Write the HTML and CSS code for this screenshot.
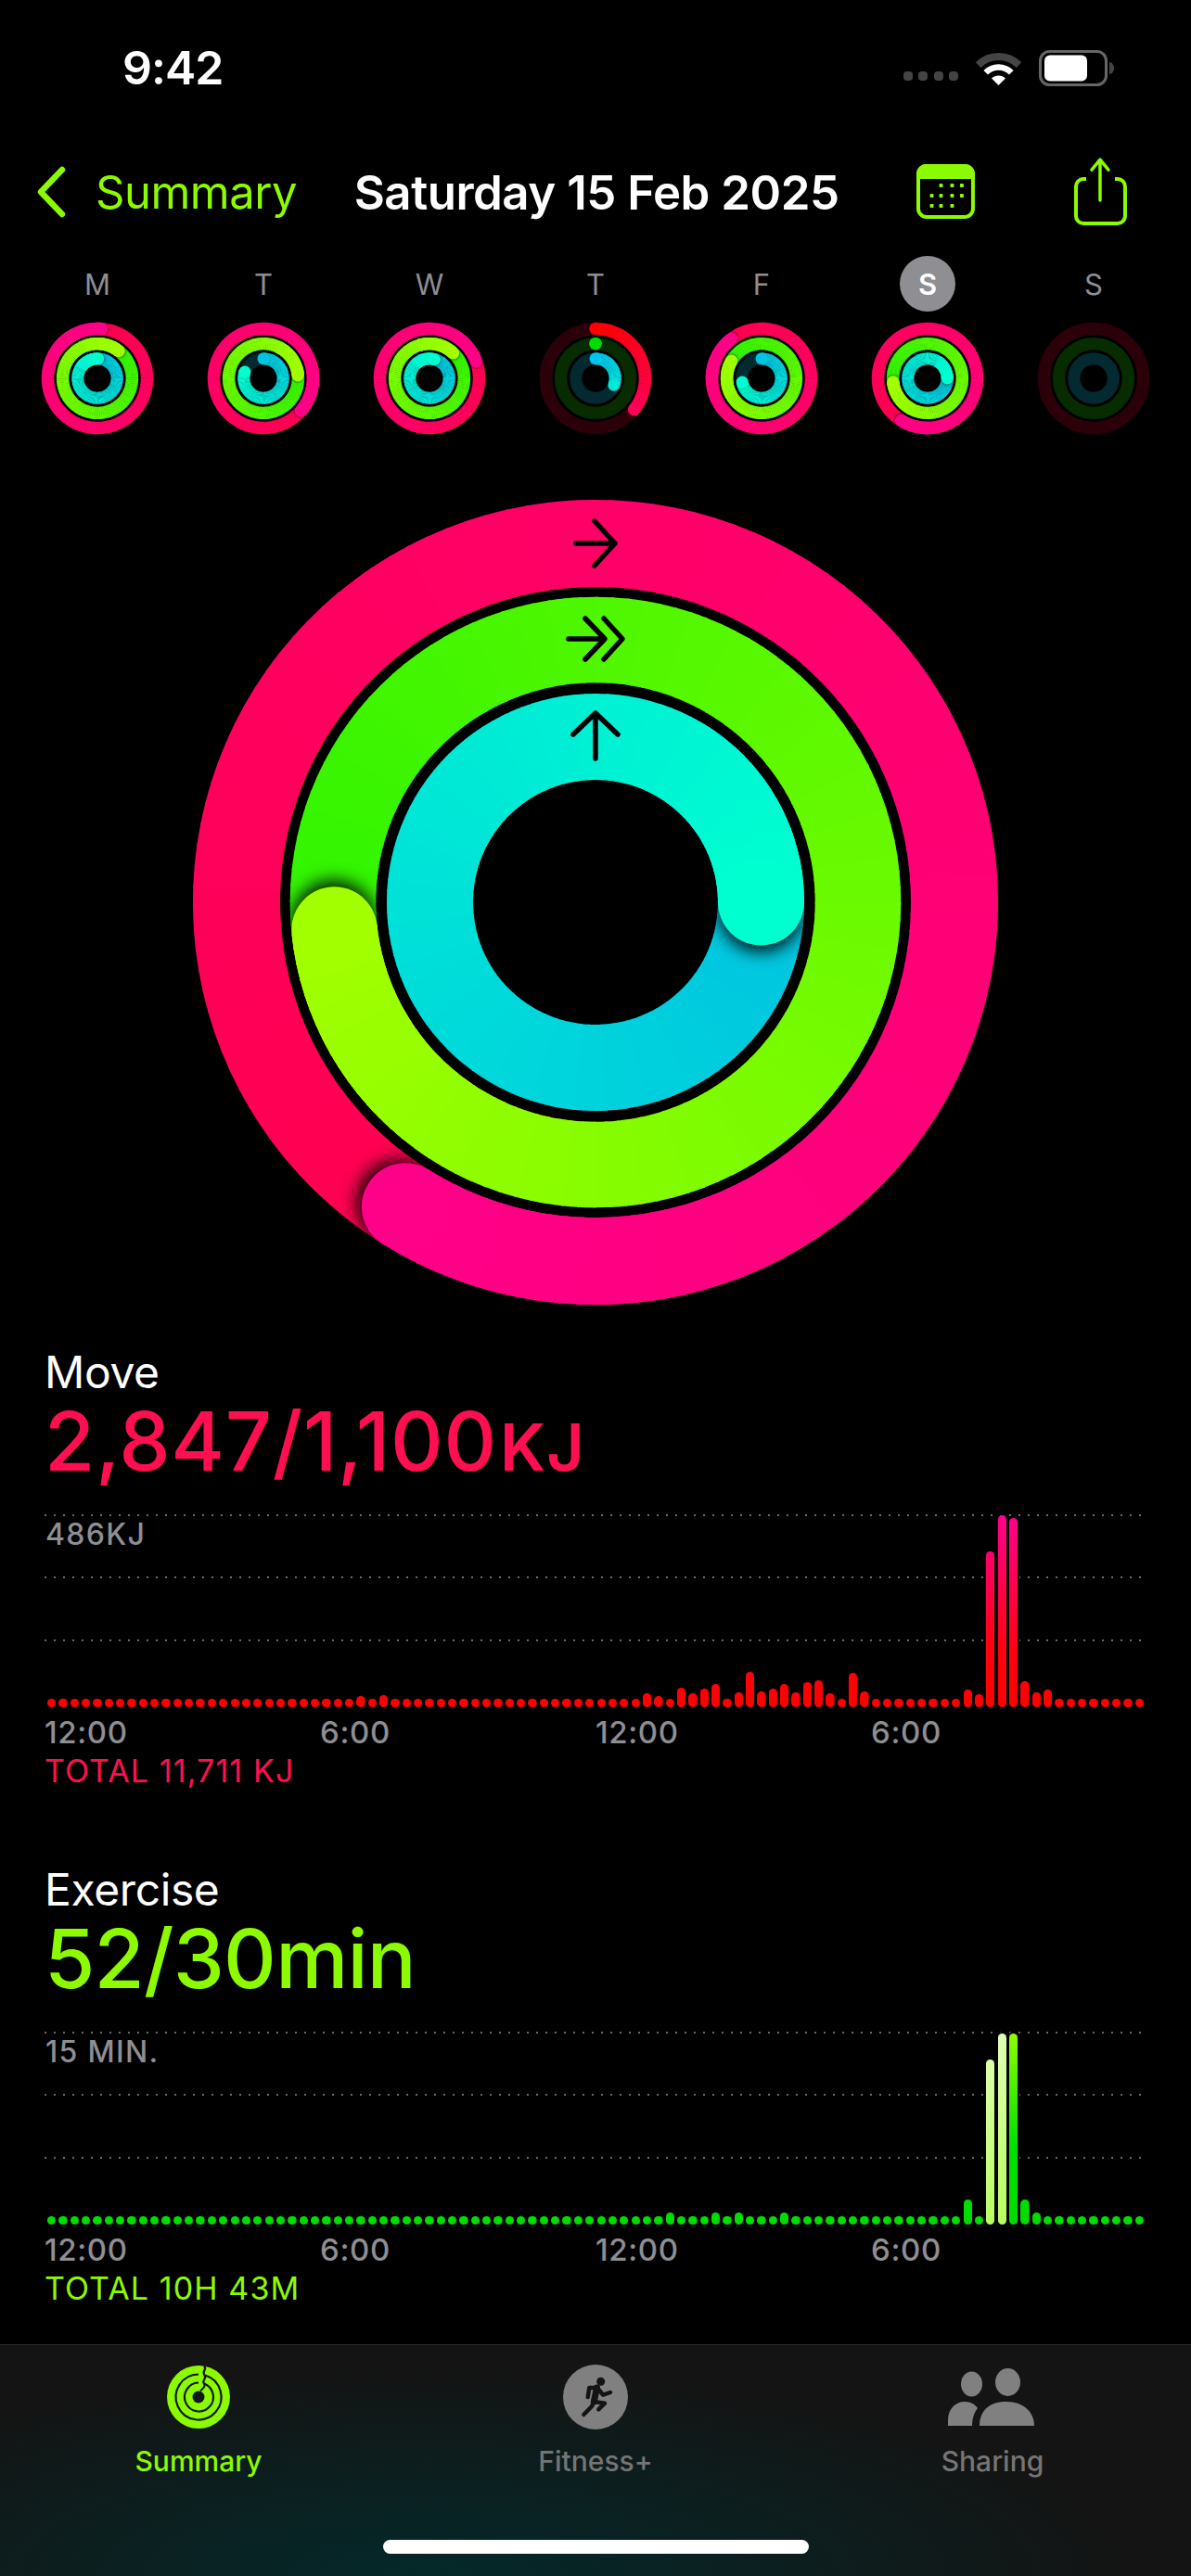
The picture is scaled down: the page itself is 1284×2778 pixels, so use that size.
FILE: index.html
```html
<!DOCTYPE html>
<html lang="en">
<head>
    <meta charset="UTF-8">
    <meta name="viewport" content="width=device-width, initial-scale=1.0">
    <title>Summary</title>
    <link rel="stylesheet" href="styles.css">
</head>
<body>
    <div class="phone">
        <div class="status">
            <span class="status-time">9:42</span>
            <div class="status-icons">
                <div class="signal"><i></i><i></i><i></i><i></i></div>
                <svg class="wifi" width="51" height="37" viewBox="0 0 51 37">
                    <path d="M3.6 15.1A31 31 0 0 1 47.4 15.1" fill="none" stroke="#444" stroke-width="8"/>
                    <path d="M11.7 23.2A19.5 19.5 0 0 1 39.3 23.2" fill="none" stroke="#fff" stroke-width="6.5"/>
                    <path d="M25.5 37L18 29.5A10.6 10.6 0 0 1 33 29.5Z" fill="#fff"/>
                </svg>
                <svg class="battery" width="82" height="39" viewBox="0 0 82 39">
                    <rect x="1.5" y="1.5" width="71" height="36" rx="10" fill="none" stroke="#666" stroke-width="3"/>
                    <rect x="6" y="5.5" width="46" height="28" rx="6" fill="#fff"/>
                    <path d="M76 13c3 .5 5 3 5 6.500s-2 6-5 6.500z" fill="#444"/>
                </svg>
            </div>
        </div>

        <header class="nav">
            <svg class="nav-back" width="33" height="56" viewBox="0 0 33 56">
                <path d="M28 4L5 28L28 52" fill="none" stroke="#8cfa00" stroke-width="6.500" stroke-linecap="round" stroke-linejoin="round"/>
            </svg>
            <span class="nav-label">Summary</span>
            <h1 class="nav-title">Saturday 15 Feb 2025</h1>
            <svg class="nav-calendar" width="63" height="59" viewBox="0 0 63 59">
                <path d="M10 0H53A10 10 0 0 1 63 10V16H0V10A10 10 0 0 1 10 0Z" fill="#8cfa00"/>
                <rect x="2" y="2" width="59" height="55" rx="9" fill="none" stroke="#8cfa00" stroke-width="4"/>
                <g fill="#8cfa00">
                    <rect x="24.500" y="21" width="4" height="4" rx="1"/>
                    <rect x="36.500" y="21" width="4" height="4" rx="1"/>
                    <rect x="47" y="21" width="4" height="4" rx="1"/>
                    <rect x="14.500" y="32" width="4" height="4" rx="1"/>
                    <rect x="24.500" y="32" width="4" height="4" rx="1"/>
                    <rect x="36.500" y="32" width="4" height="4" rx="1"/>
                    <rect x="47" y="32" width="4" height="4" rx="1"/>
                    <rect x="14.500" y="43" width="4" height="4" rx="1"/>
                    <rect x="24.500" y="43" width="4" height="4" rx="1"/>
                    <rect x="36.500" y="43" width="4" height="4" rx="1"/>
                </g>
            </svg>
            <svg class="nav-share" width="58" height="75" viewBox="0 0 58 75">
                <path d="M13 24H10A8 8 0 0 0 2 32V64A8 8 0 0 0 10 72H47A8 8 0 0 0 55 64V32A8 8 0 0 0 47 24H44" fill="none" stroke="#8cfa00" stroke-width="4"/>
                <path d="M28 47V4M19 14L28 3L37 14" fill="none" stroke="#8cfa00" stroke-width="3.500" stroke-linecap="round" stroke-linejoin="round"/>
            </svg>
        </header>

        <div class="week">
            <div class="day"><span class="day-name">M</span><svg class="day-ring" width="124" height="124"></svg></div>
            <div class="day"><span class="day-name">T</span><svg class="day-ring" width="124" height="124"></svg></div>
            <div class="day"><span class="day-name">W</span><svg class="day-ring" width="124" height="124"></svg></div>
            <div class="day"><span class="day-name">T</span><svg class="day-ring" width="124" height="124"></svg></div>
            <div class="day"><span class="day-name">F</span><svg class="day-ring" width="124" height="124"></svg></div>
            <div class="day"><span class="day-name day-today">S</span><svg class="day-ring" width="124" height="124"></svg></div>
            <div class="day"><span class="day-name">S</span><svg class="day-ring" width="124" height="124"></svg></div>
        </div>

        <svg class="hero" id="heroRing" width="880" height="880" viewBox="0 0 880 880"></svg>

        <div class="metrics">
            <section class="metric">
                <div class="metric-name">Move</div>
                <div class="metric-value value-move">2,847/1,100<span class="metric-unit">KJ</span></div>
                <div class="chart">
                    <div class="grid-row"><span class="chart-max">486KJ</span></div>
                    <div class="grid-row"></div>
                    <div class="grid-row"></div>
                    <div class="bars bars-move" id="moveBars"></div>
                </div>
                <div class="chart-hours"><span>12:00</span><span>6:00</span><span>12:00</span><span>6:00</span></div>
                <div class="metric-total value-move">TOTAL 11,711 KJ</div>
            </section>

            <section class="metric">
                <div class="metric-name">Exercise</div>
                <div class="metric-value value-exercise">52/30min</div>
                <div class="chart">
                    <div class="grid-row"><span class="chart-max">15 MIN.</span></div>
                    <div class="grid-row"></div>
                    <div class="grid-row"></div>
                    <div class="bars bars-exercise" id="exerciseBars"></div>
                </div>
                <div class="chart-hours"><span>12:00</span><span>6:00</span><span>12:00</span><span>6:00</span></div>
                <div class="metric-total value-exercise">TOTAL 10H 43M</div>
            </section>
        </div>

        <nav class="tabbar">
            <div class="tab tab-active">
                <svg width="70" height="70" viewBox="0 0 70 70">
                    <circle cx="35" cy="35" r="34" fill="#8cfa00"/>
                    <g fill="none" stroke="#10181a" stroke-width="2.200">
                        <path d="M42 11.500A24.500 24.500 0 1 1 35 10.500"/>
                        <path d="M41 20.500A15.500 15.500 0 1 1 35 19.500"/>
                        <path d="M41 1.500C45 5 38 7 41.500 11.500C44.500 15 38 17 41 20.500C43 23 40 26 37 28.500"/>
                    </g>
                    <circle cx="35" cy="35" r="6.500" fill="#10181a"/>
                </svg>
                <span class="tab-label">Summary</span>
            </div>
            <div class="tab">
                <svg width="70" height="70" viewBox="0 0 70 70">
                    <circle cx="35" cy="35" r="35" fill="#808080"/>
                    <circle cx="40.700" cy="18.300" r="4.500" fill="#141414"/>
                    <path d="M36.500 25L33.300 40" fill="none" stroke="#141414" stroke-width="7" stroke-linecap="round"/>
                    <path d="M26.700 35L28.300 25H36.700L43.300 32.700L51 30M33.300 40L31 45L22.300 54M33.300 40L45 41.700L38.300 48.300" fill="none" stroke="#141414" stroke-width="4.500" stroke-linecap="round" stroke-linejoin="round"/>
                </svg>
                <span class="tab-label">Fitness+</span>
            </div>
            <div class="tab">
                <svg width="100" height="70" viewBox="0 0 100 70">
                    <g fill="#808080">
                        <ellipse cx="27.500" cy="21" rx="11.500" ry="13.500"/>
                        <ellipse cx="66.500" cy="19" rx="13.500" ry="15"/>
                        <path d="M2 66V60C2 48 10 40 20 40C27 40 31 43 34 47C30 52 28 59 28 66Z"/>
                        <path d="M36 66C36 50 46 40 65 40C84 40 95 52 95 66Z"/>
                    </g>
                </svg>
                <span class="tab-label">Sharing</span>
            </div>
            <div class="home-indicator"></div>
        </nav>
    </div>
    <script src="app.js"></script>
</body>
</html>
```

FILE: styles.css
```css
* {
    margin: 0;
    padding: 0;
    box-sizing: border-box;
    font-family: 'Inter', 'Liberation Sans', sans-serif;
}

body {
    background-color: #000;
    color: #fff;
}

.phone {
    width: 1284px;
    height: 2778px;
    display: flex;
    flex-direction: column;
    overflow: hidden;
    background-color: #000;
}

.status {
    height: 146px;
    flex: none;
    display: flex;
    align-items: center;
    justify-content: space-between;
    padding: 0 82px 0 132px;
}

.status-time {
    font-size: 50px;
    font-weight: 600;
    letter-spacing: -1px;
}

.status-icons {
    display: flex;
    align-items: center;
    gap: 18px;
}

.signal {
    display: flex;
    gap: 6.500px;
    margin-top: 18px;
}

.signal i {
    display: block;
    width: 10px;
    height: 10px;
    border-radius: 4px;
    background: #444;
}

.nav {
    height: 130px;
    flex: none;
    display: flex;
    align-items: center;
    padding: 0 68px 0 39px;
}

.nav-back {
    margin-top: -8px;
}

.nav-label {
    font-size: 49px;
    color: #8cfa00;
    margin: -7px 0 0 31px;
    width: 279px;
    letter-spacing: -0.5px;
}

.nav-title {
    font-size: 51px;
    font-weight: 600;
    letter-spacing: -0.5px;
    width: 607px;
    margin-top: -7px;
}

.nav-calendar {
    margin-top: -9px;
}

.nav-share {
    margin-left: 107px;
    margin-top: -10px;
}

.week {
    flex: none;
    display: grid;
    grid-template-columns: repeat(7, 179px);
    padding: 0 15.500px;
}

.day {
    display: flex;
    flex-direction: column;
    align-items: center;
    gap: 10px;
}

.day-name {
    width: 60px;
    height: 60px;
    border-radius: 50%;
    display: flex;
    align-items: center;
    justify-content: center;
    font-size: 31px;
    color: #8e8e93;
}

.day-today {
    background: #8e8e93;
    color: #fff;
    font-weight: 600;
}

.hero {
    flex: none;
    display: block;
    margin: 63px 0 0 202px;
}

.metrics {
    flex: 1;
    min-height: 0;
}

.metric {
    height: 558px;
    padding: 39px 54px 0 48px;
}

.metric-name {
    font-size: 48px;
    line-height: 56px;
    letter-spacing: -0.4px;
}

.metric-value {
    font-size: 88px;
    line-height: 88px;
    font-weight: 500;
    margin-top: 2px;
}

.metric-unit {
    font-size: 70px;
    line-height: 0;
    font-weight: 600;
    letter-spacing: 1px;
    margin-left: 3px;
}

.value-move {
    color: #ff0f50;
}

.value-exercise {
    color: #8cfa00;
}

.metric-value.value-move {
    letter-spacing: 0.7px;
}

.metric-value.value-exercise {
    letter-spacing: -0.8px;
}

.chart {
    position: relative;
    height: 208px;
    margin-top: 35px;
}

.grid-row {
    height: 67.300px;
    background-image: linear-gradient(to right, #6a6a6a 2px, transparent 2px);
    background-size: 10px 2px;
    background-repeat: repeat-x;
}

.chart-max {
    display: block;
    padding: 4px 0 0 1px;
    font-size: 32px;
    line-height: 36px;
    font-weight: 500;
    letter-spacing: 1.300px;
    color: #8e8e93;
}

.bars {
    position: absolute;
    left: 3px;
    right: -3px;
    bottom: 0;
    display: flex;
    align-items: flex-end;
    justify-content: space-between;
}

.bar {
    width: 9.300px;
    border-radius: 5px;
    box-shadow: 0 0 0 2px #000;
    background-size: 100% 208px;
    background-position: bottom;
}

.bars-move .bar {
    background-image: linear-gradient(to top, #ff0000, #ff0010 30%, #ff0090);
}

.bars-exercise .bar {
    background-image: linear-gradient(to top, #00dc00, #00e000 40%, #90ff00);
}

.bars-exercise .bar-pale {
    background-image: linear-gradient(to top, #b8ff60, #e0ffb4);
}

.chart-hours {
    display: grid;
    grid-template-columns: repeat(4, 297px);
    margin-top: 9px;
    font-size: 33px;
    line-height: 36px;
    font-weight: 500;
    color: #8e8e93;
    letter-spacing: 0.6px;
}

.metric-total {
    font-size: 34px;
    line-height: 36px;
    margin-top: 6px;
    letter-spacing: 1.100px;
}

.tabbar {
    position: relative;
    flex: none;
    height: 250px;
    display: grid;
    grid-template-columns: repeat(3, 428px);
    border-top: 1px solid #2a2a2a;
    padding-top: 21px;
    background: radial-gradient(ellipse 760px 220px at 36% 100%, #04292a, rgba(4,41,42,0)), #141414;
}

.tab {
    display: flex;
    flex-direction: column;
    align-items: center;
    gap: 16px;
}

.tab-label {
    font-size: 30px;
    line-height: 36px;
    font-weight: 500;
    color: #757575;
}

.tab-active .tab-label {
    color: #8cfa00;
}

.home-indicator {
    position: absolute;
    left: 413px;
    bottom: 24px;
    width: 459px;
    height: 15px;
    border-radius: 8px;
    background: #fff;
}
```

FILE: app.js
```js
const NS = 'http://www.w3.org/2000/svg';
let idCount = 0;

const MOVE = { from: '#ff0050', to: '#ff0088', track: '#2c0008' };
const EXERCISE = { from: '#30f400', to: '#a2ff00', track: '#062c00' };
const STAND = { from: '#00c4e0', to: '#00ffd0', track: '#032a30' };

const el = (parent, name, attrs) => {
    const node = document.createElementNS(NS, name);
    Object.keys(attrs).forEach((k) => node.setAttribute(k, attrs[k]));
    parent.appendChild(node);
    return node;
};

const hex = (c) => [1, 3, 5].map((i) => parseInt(c.substr(i, 2), 16));

const mix = (a, b, t) => {
    const x = hex(a), y = hex(b);
    return 'rgb(' + x.map((v, i) => Math.round(v + (y[i] - v) * t)).join(',') + ')';
};

const point = (c, r, deg) => {
    const rad = deg * Math.PI / 180;
    return [c + r * Math.sin(rad), c - r * Math.cos(rad)];
};

// arco desenhado em pedaços para simular o gradiente angular
const sweep = (svg, c, ring, start, end, t0, t1) => {
    const steps = Math.max(1, Math.ceil((end - start) / 3));
    for (let i = 0; i < steps; i++) {
        const a = start + (end - start) * i / steps;
        const b = start + (end - start) * (i + 1) / steps + (i < steps - 1 ? 0.5 : 0);
        const p = point(c, ring.r, a), q = point(c, ring.r, b);
        el(svg, 'path', {
            d: `M${p[0]} ${p[1]}A${ring.r} ${ring.r} 0 0 1 ${q[0]} ${q[1]}`,
            fill: 'none',
            stroke: mix(ring.from, ring.to, t0 + (t1 - t0) * (i + 0.5) / steps),
            'stroke-width': ring.w
        });
    }
};

const drawRing = (svg, c, ring) => {
    el(svg, 'circle', { cx: c, cy: c, r: ring.r, fill: 'none', stroke: ring.track, 'stroke-width': ring.w });
    if (ring.head === null) return;

    const tip = point(c, ring.r, ring.head);
    if (!ring.full) {
        const first = point(c, ring.r, 0);
        el(svg, 'circle', { cx: first[0], cy: first[1], r: ring.w / 2, fill: ring.from });
        sweep(svg, c, ring, 0, ring.head, 0, 1);
        el(svg, 'circle', { cx: tip[0], cy: tip[1], r: ring.w / 2, fill: ring.to });
        return;
    }

    sweep(svg, c, ring, ring.head - 360, ring.head, 0, 1);

    // sombra da ponta, recortada dentro do anel
    const id = 'ring' + (++idCount);
    const mask = el(svg, 'mask', { id: id + 'm', maskUnits: 'userSpaceOnUse', x: 0, y: 0, width: c * 2, height: c * 2 });
    el(mask, 'circle', { cx: c, cy: c, r: ring.r + ring.w / 2, fill: '#fff' });
    el(mask, 'circle', { cx: c, cy: c, r: ring.r - ring.w / 2, fill: '#000' });
    const filter = el(svg, 'filter', { id: id + 'f', x: '-60%', y: '-60%', width: '220%', height: '220%' });
    el(filter, 'feGaussianBlur', { stdDeviation: ring.w * 0.09 });
    const holder = el(svg, 'g', { mask: `url(#${id}m)` });
    const ahead = point(c, ring.r, ring.head + (ring.w * 4.5 / ring.r));
    el(holder, 'circle', {
        cx: ahead[0], cy: ahead[1], r: ring.w / 2, fill: '#000',
        'fill-opacity': ring.w < 20 ? 0.45 : 0.85, filter: `url(#${id}f)`
    });

    sweep(svg, c, ring, ring.head - 60, ring.head, 1 - 60 / 360, 1);
    el(svg, 'circle', { cx: tip[0], cy: tip[1], r: ring.w / 2, fill: ring.to });
};

const drawSet = (svg, c, sizes, heads) => {
    sizes.forEach((size, i) => {
        const base = [MOVE, EXERCISE, STAND][i];
        drawRing(svg, c, Object.assign({}, base, size, heads[i]));
    });
};

const over = (head) => ({ head, full: true });
const part = (head, from, to) => Object.assign({ head, full: false }, from ? { from } : {}, to ? { to } : {});
const none = { head: null };

const WEEK = [
    [over(5), over(38), over(2)],
    [over(131), over(85), part(289)],
    [over(70), over(43), over(15)],
    [part(129, '#ff0000', '#ff0058'), part(0, '#00dc00', '#00dc00'), part(110, '#00c4f0', '#00e8d8')],
    [over(323), over(300), part(259)],
    [over(212), over(264), over(90)],
    [none, none, none]
];

const smallSizes = [{ r: 53.5, w: 13.4 }, { r: 37.4, w: 13.4 }, { r: 21.2, w: 13 }];
document.querySelectorAll('.day-ring').forEach((svg, i) => drawSet(svg, 62, smallSizes, WEEK[i]));

const hero = document.getElementById('heroRing');
const heroC = 440;
drawSet(hero, heroC, [{ r: 387, w: 94 }, { r: 283, w: 92.5 }, { r: 178.5, w: 93 }], WEEK[5]);

// setas por cima dos anéis
const arrows = [
    `M${heroC - 21} ${heroC - 387}H${heroC + 21}M${heroC - 1} ${heroC - 411}L${heroC + 21} ${heroC - 387}L${heroC - 1} ${heroC - 363}`,
    `M${heroC - 29} ${heroC - 284}H${heroC + 9}M${heroC - 11} ${heroC - 306}L${heroC + 10} ${heroC - 284}L${heroC - 11} ${heroC - 262}M${heroC + 9} ${heroC - 306}L${heroC + 29} ${heroC - 284}L${heroC + 9} ${heroC - 262}`,
    `M${heroC} ${heroC - 155}V${heroC - 203}M${heroC - 24} ${heroC - 181}L${heroC} ${heroC - 204}L${heroC + 24} ${heroC - 181}`
];
arrows.forEach((d) => el(hero, 'path', {
    d, fill: 'none', stroke: '#000', 'stroke-width': 5.5, 'stroke-linecap': 'round', 'stroke-linejoin': 'round'
}));

// alturas dos 96 intervalos de 15 minutos (o resto fica no mínimo)
const MOVE_BARS = {
    27: 12, 29: 13, 52: 15, 53: 12, 55: 21, 56: 15, 57: 20, 58: 25, 60: 16, 61: 38, 62: 17, 63: 20,
    64: 25, 65: 16, 66: 27, 67: 29, 68: 15, 70: 37, 71: 17, 80: 19, 81: 14, 82: 168, 83: 207, 84: 204,
    85: 28, 86: 16, 87: 19
};
const EXERCISE_BARS = { 54: 13, 58: 13, 60: 13, 64: 13, 80: 27, 82: 178, 83: 206, 84: 206, 85: 27, 86: 13 };

const fillBars = (id, heights, pale) => {
    const box = document.getElementById(id);
    for (let i = 0; i < 96; i++) {
        const bar = document.createElement('div');
        bar.className = pale.includes(i) ? 'bar bar-pale' : 'bar';
        bar.style.height = (heights[i] || 9) + 'px';
        box.appendChild(bar);
    }
};

fillBars('moveBars', MOVE_BARS, []);
fillBars('exerciseBars', EXERCISE_BARS, [82, 83]);
```
